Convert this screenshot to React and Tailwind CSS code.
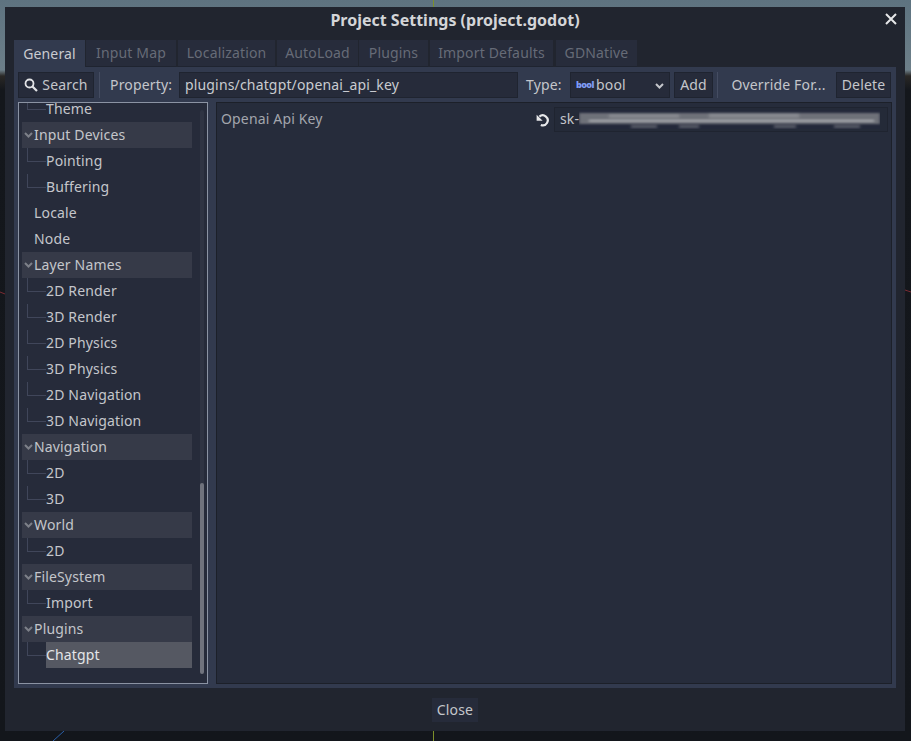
const font = { fontFamily: '"Noto Sans", sans-serif' }

const tabs = [
  ['General', 'w-[71px] mr-[1px]'],
  ['Input Map', 'w-[90px] mr-[2px]'],
  ['Localization', 'w-[97px] mr-[2px]'],
  ['AutoLoad', 'w-[81px] mr-[1px]'],
  ['Plugins', 'w-[69px] mr-[2px]'],
  ['Import Defaults', 'w-[123px] mr-[3px]'],
  ['GDNative', 'w-[81px]'],
]

// type: s = section, c = child, l = top level leaf, x = selected child
const rows = [
  ['c', 'Theme'],
  ['s', 'Input Devices'],
  ['c', 'Pointing'],
  ['c', 'Buffering'],
  ['l', 'Locale'],
  ['l', 'Node'],
  ['s', 'Layer Names'],
  ['c', '2D Render'],
  ['c', '3D Render'],
  ['c', '2D Physics'],
  ['c', '3D Physics'],
  ['c', '2D Navigation'],
  ['c', '3D Navigation'],
  ['s', 'Navigation'],
  ['c', '2D'],
  ['c', '3D'],
  ['s', 'World'],
  ['c', '2D'],
  ['s', 'FileSystem'],
  ['c', 'Import'],
  ['s', 'Plugins'],
  ['x', 'Chatgpt'],
]

function Chevron({ className, color = '#7d8089' }) {
  return (
    <svg className={className} width="9" height="6" viewBox="0 0 9 6" fill="none">
      <path d="M1 1 L4.5 4.5 L8 1" stroke={color} strokeWidth="2" />
    </svg>
  )
}

function Row({ type, label }) {
  if (type === 's') {
    return (
      <div className="relative h-[26px] ml-[3px] w-[170px] bg-[#363a48] flex items-center pl-[12px] text-[#c4c6cb]">
        <Chevron className="absolute left-[2px] top-[10px]" />
        {label}
      </div>
    )
  }
  if (type === 'l') {
    return <div className="h-[26px] flex items-center pl-[15px] text-[#c4c6cb]">{label}</div>
  }
  const selected = type === 'x'
  return (
    <div className="relative h-[26px] pl-[27px]">
      <div className="absolute left-[8px] top-0 w-px h-[13px] bg-[#40465a]" />
      <div className="absolute left-[8px] top-[13px] w-[19px] h-px bg-[#40465a]" />
      <div className={selected
        ? 'h-[26px] w-[146px] bg-[#555862] flex items-center text-[#e4e5e8]'
        : 'h-[26px] flex items-center text-[#c4c6cb]'}>
        {label}
      </div>
    </div>
  )
}

function Button({ className, children }) {
  return (
    <div className={'h-[26px] flex items-center justify-center bg-[#262b3a] border border-[#1f2430] text-[#c4c6cb] ' + className}>
      {children}
    </div>
  )
}

export default function App() {
  return (
    <div style={font} className="relative w-[911px] h-[741px] overflow-hidden pl-[5px] pt-[7px] text-[14px] leading-[20px] tracking-[0.16px] bg-[linear-gradient(#5e7380_0px,#6d7f89_70px,#2a2826_76px,#14171c_90px,#13161b_100%)]">
      <svg className="absolute left-0 top-0" width="911" height="741" fill="none">
        <path d="M433.5 0V7M433.5 731V741" stroke="#7d8f2a" />
        <path d="M0 292 L5 294" stroke="#7a2b33" />
        <path d="M53 741 L64 731" stroke="#2b5fa8" />
        <path d="M905 290 L911 292" stroke="#7a2b33" />
      </svg>

      <div className="relative w-[900px] h-[724px] bg-[#21252f] flex flex-col">
        <div className="relative h-[33px] pb-[7px] flex items-center justify-center text-[16px] font-bold tracking-normal text-[#d4d5d8]">
          Project Settings (project.godot)
          <svg className="absolute left-[880px] top-[6px]" width="12" height="12" viewBox="0 0 12 12" fill="none">
            <path d="M1 1 L11 11 M11 1 L1 11" stroke="#e6e7e9" strokeWidth="2" />
          </svg>
        </div>

        <div className="flex h-[27px] ml-[9px]">
          {tabs.map(([t, size], i) => (
            <div
              key={t}
              className={size + (i === 0
                ? ' h-[27px] flex items-center justify-center bg-[#323a4e] text-[#c9cbd0]'
                : ' h-[27px] flex items-center justify-center bg-[#272c3b] border-b border-[#1f2430] text-[#666b77]')}
            >
              {t}
            </div>
          ))}
        </div>

        <div className="w-[882px] h-[621px] ml-[9px] bg-[#323a4e] px-[4px] pt-[5px]">
          <div className="flex items-center h-[26px]">
            <Button className="w-[76px] gap-[4px]">
              <svg width="14" height="14" viewBox="0 0 14 14" fill="none">
                <circle cx="5.5" cy="5.5" r="4" stroke="#e2e3e6" strokeWidth="1.8" />
                <path d="M8.5 8.5 L13 13" stroke="#e2e3e6" strokeWidth="2.2" />
              </svg>
              Search
            </Button>
            <div className="w-px h-[26px] bg-[#454d62] ml-[5px]" />
            <div className="ml-[10px] w-[69px] text-[#c4c6cb]">Property:</div>
            <div className="w-[339px] h-[26px] flex items-center pl-[5px] bg-[#262b3a] border border-[#1f2430] text-[#c9cbd0]">
              plugins/chatgpt/openai_api_key
            </div>
            <div className="ml-[8px] w-[44px] text-[#c4c6cb]">Type:</div>
            <div className="relative w-[100px] h-[26px] flex items-center pl-[5px] gap-[4px] bg-[#262b3a] border border-[#1f2430] text-[#c4c6cb]">
              <span className="w-[16px] text-[9px] font-black tracking-[-0.6px] text-[#7f9cf5]">bool</span>
              bool
              <Chevron className="absolute left-[84px] top-[10px]" color="#c4c6cb" />
            </div>
            <Button className="ml-[4px] w-[39px]">Add</Button>
            <div className="w-px h-[26px] bg-[#454d62] ml-[4px]" />
            <div className="ml-[5px] w-[111px] h-[26px] flex items-center justify-center text-[#c4c6cb]">Override For...</div>
            <Button className="ml-[2px] w-[55px]">Delete</Button>
          </div>

          <div className="flex gap-[8px] mt-[4px]">
            <div className="relative w-[190px] h-[582px] overflow-hidden bg-[#262b3a] border border-[#8b93a3]">
              <div className="mt-[-7px]">
                {rows.map(([type, label], i) => (
                  <Row key={i} type={type} label={label} />
                ))}
              </div>
              <div className="absolute left-[181px] top-[7px] w-[4px] h-[564px] rounded-full bg-[#2f3443]" />
              <div className="absolute left-[181px] top-[380px] w-[4px] h-[191px] rounded-full bg-[#70737d]" />
            </div>

            <div className="w-[676px] h-[582px] bg-[#262c3b] border border-[#1c2029] pl-[4px] pr-[3px] pt-[4px]">
              <div className="flex items-center h-[25px]">
                <div className="flex-1 mt-[-2px] text-[#a3a6ad]">Openai Api Key</div>
                <svg className="mr-[4px]" width="14" height="14" viewBox="0 0 14 14" fill="none">
                  <path d="M3.4 3.6 A5 5 0 1 1 4.8 12" stroke="#e8e9eb" strokeWidth="2.2" />
                  <path d="M0.6 1.8 L0.6 7.8 L6.6 7.8 Z" fill="#e8e9eb" />
                </svg>
                <div className="w-[334px] h-[25px] flex items-center pl-[5px] bg-[#242a38] border border-[#1f2430] text-[#c4c6cb]">
                  <span className="mt-[-1px]">sk-</span>
                  <svg width="301" height="19" viewBox="0 0 301 19">
                    <defs>
                      <filter id="smear" x="-5%" y="-40%" width="110%" height="180%">
                        <feGaussianBlur stdDeviation="1.8 1.1" />
                      </filter>
                    </defs>
                    <rect width="301" height="19" fill="#23283a" />
                    <g filter="url(#smear)">
                      <rect x="0" y="3" width="301" height="11" fill="#6e7179" />
                      <rect x="30" y="4" width="70" height="4" fill="#85878e" />
                      <rect x="130" y="3" width="90" height="5" fill="#85878e" />
                      <rect x="10" y="10" width="285" height="1.5" fill="#b4b6bb" />
                      <rect x="52" y="15" width="26" height="3" fill="#555965" />
                      <rect x="100" y="15" width="20" height="3" fill="#555965" />
                      <rect x="195" y="15" width="22" height="3" fill="#555965" />
                      <rect x="255" y="15" width="26" height="3" fill="#555965" />
                    </g>
                  </svg>
                </div>
              </div>
            </div>
          </div>
        </div>

        <div className="flex justify-center pt-[10px]">
          <div className="w-[46px] h-[24px] flex items-center justify-center bg-[#262b3a] text-[#c4c6cb]">Close</div>
        </div>
      </div>
    </div>
  )
}
